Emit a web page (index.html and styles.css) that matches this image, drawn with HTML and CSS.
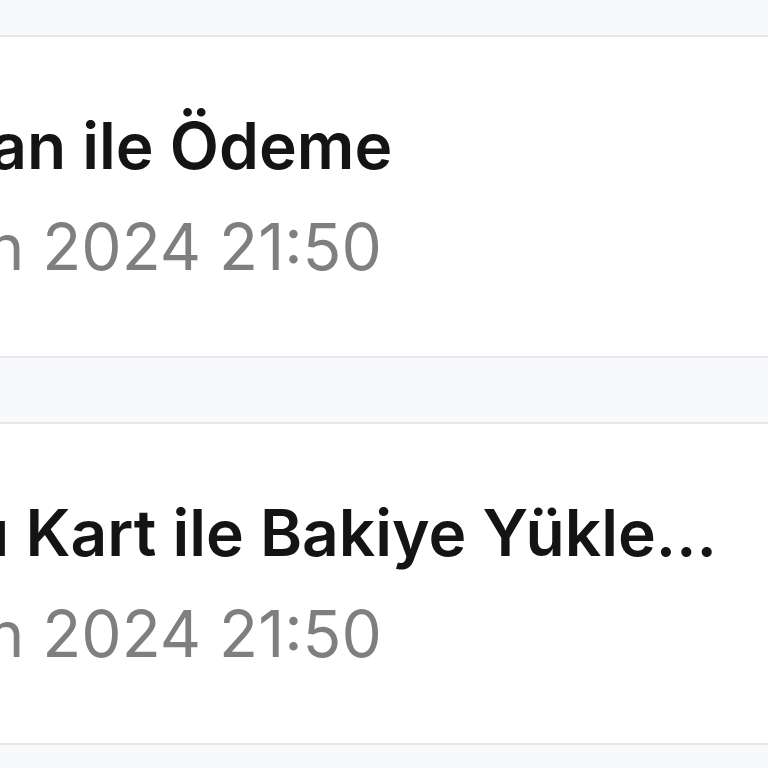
FILE: index.html
```html
<!DOCTYPE html>
<html lang="tr">
<head>
    <meta charset="UTF-8">
    <meta name="viewport" content="width=device-width, initial-scale=1.0">
    <title>İşlem Geçmişi</title>
    <link rel="stylesheet" href="styles.css">
</head>
<body>
    <!-- Transaction list -->
    <div class="tx-list">
        <div class="tx-card">
            <div class="tx-title">Hesaptan ile Ödeme</div>
            <div class="tx-date">12 Nisan 2024 21:50</div>
        </div>
        <div class="tx-card">
            <div class="tx-title">Kuponu Kart ile Bakiye Yükleme</div>
            <div class="tx-date">12 Nisan 2024 21:50</div>
        </div>
    </div>
</body>
</html>
```
FILE: styles.css
```css
body {
    margin: 0;
    padding-top: 35px;
    background-color: #f8f9fb;
    font-family: Inter, "Noto Sans", sans-serif;
    overflow: hidden;
}

/* List */
.tx-list {
    display: flex;
    flex-direction: column;
    gap: 64px;
    margin-left: -260px;
}

.tx-card {
    background-color: #fff;
    border-top: 2px solid #e5e7eb;
    border-bottom: 2px solid #e5e7eb;
    padding: 71px 28px 71px 30px;
}

.tx-title {
    font-size: 64px;
    font-weight: 600;
    line-height: 76px;
    color: #141414;
    white-space: nowrap;
    overflow: hidden;
    text-overflow: ellipsis;
}

.tx-date {
    margin-top: 25px;
    font-size: 64px;
    line-height: 76px;
    color: #7f7f7f;
    white-space: nowrap;
}
```
